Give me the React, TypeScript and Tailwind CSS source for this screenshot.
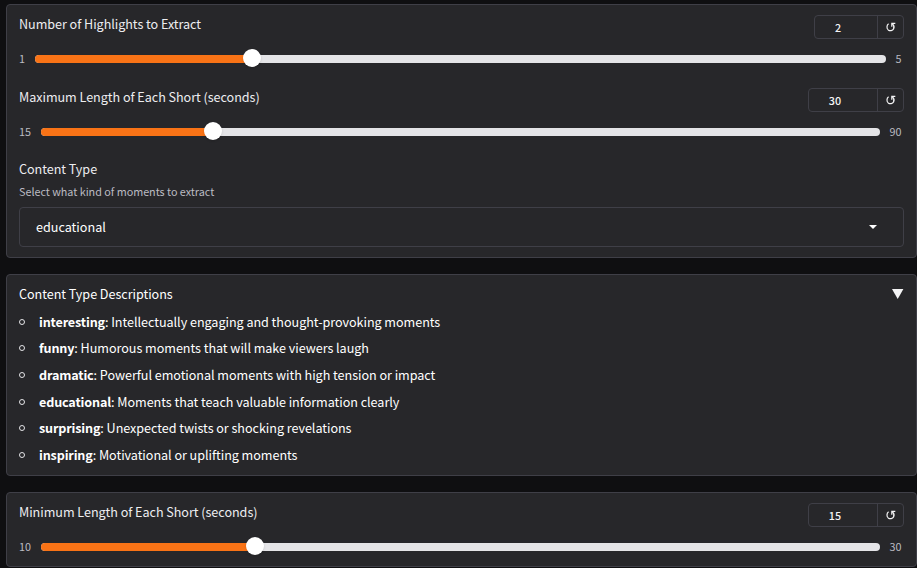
type SliderProps = {
  label: string;
  value: number;
  min: number;
  max: number;
  fill: number;
  boxWidth: string;
  minWidth: string;
  maxWidth: string;
};

function ResetIcon() {
  return (
    <svg viewBox="0 0 10 10" className="-mt-px h-[10px] w-[10px]" fill="none" stroke="#f4f4f5" strokeWidth="1.2">
      <path d="M2.6 1.8C0.5 3.3 0.5 6.5 2.2 7.9C4 9.2 6.6 8.7 7.6 6.9C8.5 5.2 7.9 3.2 6.3 1.8" />
      <path d="M5.8 4.8V1.4H9.3" />
    </svg>
  );
}

function SliderField({ label, value, min, max, fill, boxWidth, minWidth, maxWidth }: SliderProps) {
  return (
    <div className="flex h-[52px] flex-col">
      <div className="flex h-6 items-start justify-between">
        <label className="-mt-px text-[12.6px] leading-5 tracking-[-0.04px] text-[#ededf0]">{label}</label>
        <div className={`flex h-6 rounded-[4px] border border-zinc-700 ${boxWidth}`}>
          <span className="flex-1 pr-[16px] text-center text-[10.8px] leading-[23px] font-medium text-zinc-100">{value}</span>
          <button className="flex w-[26px] items-center justify-center border-l border-zinc-700">
            <ResetIcon />
          </button>
        </div>
      </div>
      <div className="mt-[11px] flex h-[18px] items-center text-[10.8px] text-[#bbbbc2]">
        <span className={`shrink-0 ${minWidth}`}>{min}</span>
        <div className="relative h-2 flex-1 rounded-full bg-[#e4e4e7]">
          <div className="h-2 rounded-full bg-[#f97316]" style={{ width: fill }} />
          <div
            className="absolute -top-[6px] h-[18px] w-[18px] rounded-full bg-white shadow-sm"
            style={{ left: fill - 9 }}
          />
        </div>
        <span className={`shrink-0 pr-[2.5px] text-right ${maxWidth}`}>{max}</span>
      </div>
    </div>
  );
}

const descriptions = [
  ["interesting", "Intellectually engaging and thought-provoking moments"],
  ["funny", "Humorous moments that will make viewers laugh"],
  ["dramatic", "Powerful emotional moments with high tension or impact"],
  ["educational", "Moments that teach valuable information clearly"],
  ["surprising", "Unexpected twists or shocking revelations"],
  ["inspiring", "Motivational or uplifting moments"],
];

export default function App() {
  return (
    <div className="flex h-[568px] w-[917px] flex-col gap-4 overflow-hidden bg-[#0f0f11] pt-1 pl-[6px] font-['Noto_Sans_CJK_SC','Noto_Sans',sans-serif]">
      <section className="h-[254px] shrink-0 rounded-[4px] border border-zinc-700 bg-[#27272a] px-3 pt-[10px]">
        <SliderField label="Number of Highlights to Extract" value={2} min={1} max={5} fill={217} boxWidth="w-[90px]" minWidth="w-[16px]" maxWidth="w-[18px]" />
        <div className="mt-[21px]">
          <SliderField label="Maximum Length of Each Short (seconds)" value={30} min={15} max={90} fill={172} boxWidth="w-[96px]" minWidth="w-[22px]" maxWidth="w-[24px]" />
        </div>
        <div className="mt-[19px] text-[12.6px] leading-5 tracking-[-0.04px] text-[#ededf0]">Content Type</div>
        <div className="mt-[4px] text-[10.8px] leading-4 tracking-[-0.02px] text-[#bbbbc2]">Select what kind of moments to extract</div>
        <div className="mt-[8px] flex h-10 items-center justify-between rounded-[4px] border border-zinc-700 pr-[26px] pl-4">
          <span className="text-[12.6px] leading-5 text-white">educational</span>
          <svg viewBox="0 0 8 4" className="h-1 w-2" fill="#fff">
            <path d="M0 0h8L4 4z" />
          </svg>
        </div>
      </section>

      <section className="h-[202px] shrink-0 rounded-[4px] border border-zinc-700 bg-[#27272a] px-3 pt-[9px]">
        <div className="flex h-5 items-center justify-between">
          <span className="text-[12.6px] leading-5 tracking-[-0.04px] text-white">Content Type Descriptions</span>
          <svg viewBox="0 0 12 10" className="h-[10px] w-3" fill="#f4f4f5">
            <path d="M0 0h11.4L5.7 10z" />
          </svg>
        </div>
        <ul className="mt-[4.6px]">
          {descriptions.map(([name, text]) => (
            <li key={name} className="flex h-[26.6px] items-center text-[12.6px] tracking-[-0.04px] text-white">
              <span className="mr-[14px] h-[6px] w-[6px] rounded-full border border-zinc-200" />
              <span className="leading-5">
                <strong className="font-bold tracking-[-0.15px]">{name}</strong>: {text}
              </span>
            </li>
          ))}
        </ul>
      </section>

      <section className="h-[75px] shrink-0 rounded-[4px] border border-zinc-700 bg-[#27272a] px-3 pt-[10px]">
        <SliderField label="Minimum Length of Each Short (seconds)" value={15} min={10} max={30} fill={214} boxWidth="w-[96px]" minWidth="w-[22px]" maxWidth="w-[24px]" />
      </section>
    </div>
  );
}
